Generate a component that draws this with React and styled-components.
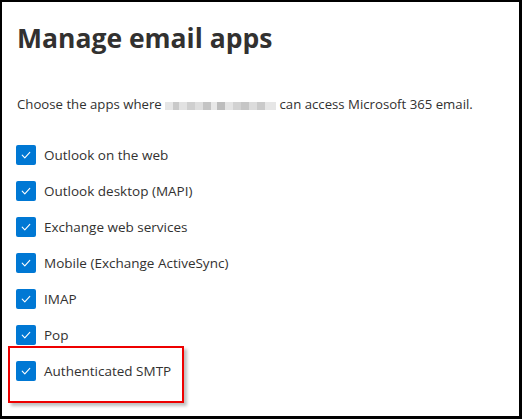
import React from 'react';
import styled, { createGlobalStyle } from 'styled-components';

const GlobalStyle = createGlobalStyle`
  html, body {
    margin: 0;
    padding: 0;
    background: #ffffff;
  }
  * {
    box-sizing: border-box;
  }
`;

const Frame = styled.div`
  width: 522px;
  height: 419px;
  border-style: solid;
  border-color: #000000;
  border-width: 2px 3px 3px 2px;
  background: #ffffff;
  padding: 0 0 0 15px;
  font-family: "Open Sans", "Noto Sans", sans-serif;
  color: #323130;
  display: flex;
  flex-direction: column;
`;

const Title = styled.h1`
  margin: 16px 0 0 0;
  font-size: 26.5px;
  line-height: 40px;
  font-weight: 700;
  color: #323130;
`;

const Description = styled.p`
  margin: 36px 0 0 0;
  font-size: 13.2px;
  line-height: 20px;
  color: #323130;
`;

const Blurred = styled.span`
  display: inline-block;
  width: 111px;
  height: 8px;
  vertical-align: -1px;
  background: linear-gradient(
    90deg,
    #e6e6e6 0 8px, #c9c9c9 8px 14px, #e2e2e2 14px 22px, #cfcfcf 22px 30px,
    #dedede 30px 38px, #c4c4c4 38px 46px, #e8e8e8 46px 52px, #bdbdbd 52px 60px,
    #e4e4e4 60px 68px, #d2d2d2 68px 76px, #c6c6c6 76px 84px, #dcdcdc 84px 92px,
    #cacaca 92px 100px, #e6e6e6 100px 111px
  );
`;

const List = styled.ul`
  list-style: none;
  margin: 31px 0 0 0;
  padding: 0;
  display: flex;
  flex-direction: column;
  gap: 16px;
`;

const Item = styled.li`
  position: relative;
  display: flex;
  align-items: center;
  gap: 8px;
  height: 20px;
  margin-left: -1px;
  font-size: 13.5px;
  color: #323130;
`;

const Box = styled.span`
  width: 20px;
  height: 20px;
  border-radius: 2px;
  background: #0078d4;
  display: flex;
  align-items: center;
  justify-content: center;
  flex-shrink: 0;
`;

const Highlight = styled.span`
  position: absolute;
  left: -8px;
  top: -15px;
  width: 176px;
  height: 57px;
  border: 2px solid #ee0000;
  box-shadow: 3px 3px 3px rgba(0, 0, 0, 0.25);
  pointer-events: none;
`;

const Check = () => (
  <svg width="12" height="12" viewBox="0 0 12 12">
    <path d="M2.2 6.2 L4.8 8.8 L9.8 3.4" fill="none" stroke="#ffffff" strokeWidth="1.1" strokeLinecap="round" strokeLinejoin="round" />
  </svg>
);

const apps = [
  'Outlook on the web',
  'Outlook desktop (MAPI)',
  'Exchange web services',
  'Mobile (Exchange ActiveSync)',
  'IMAP',
  'Pop',
  'Authenticated SMTP',
];

export default function App() {
  return (
    <>
      <GlobalStyle />
      <Frame>
        <Title>Manage email apps</Title>
        <Description>
          Choose the apps where <Blurred /> can access Microsoft 365 email.
        </Description>
        <List>
          {apps.map((name, i) => (
            <Item key={name}>
              <Box><Check /></Box>
              {name}
              {i === apps.length - 1 && <Highlight />}
            </Item>
          ))}
        </List>
      </Frame>
    </>
  );
}
